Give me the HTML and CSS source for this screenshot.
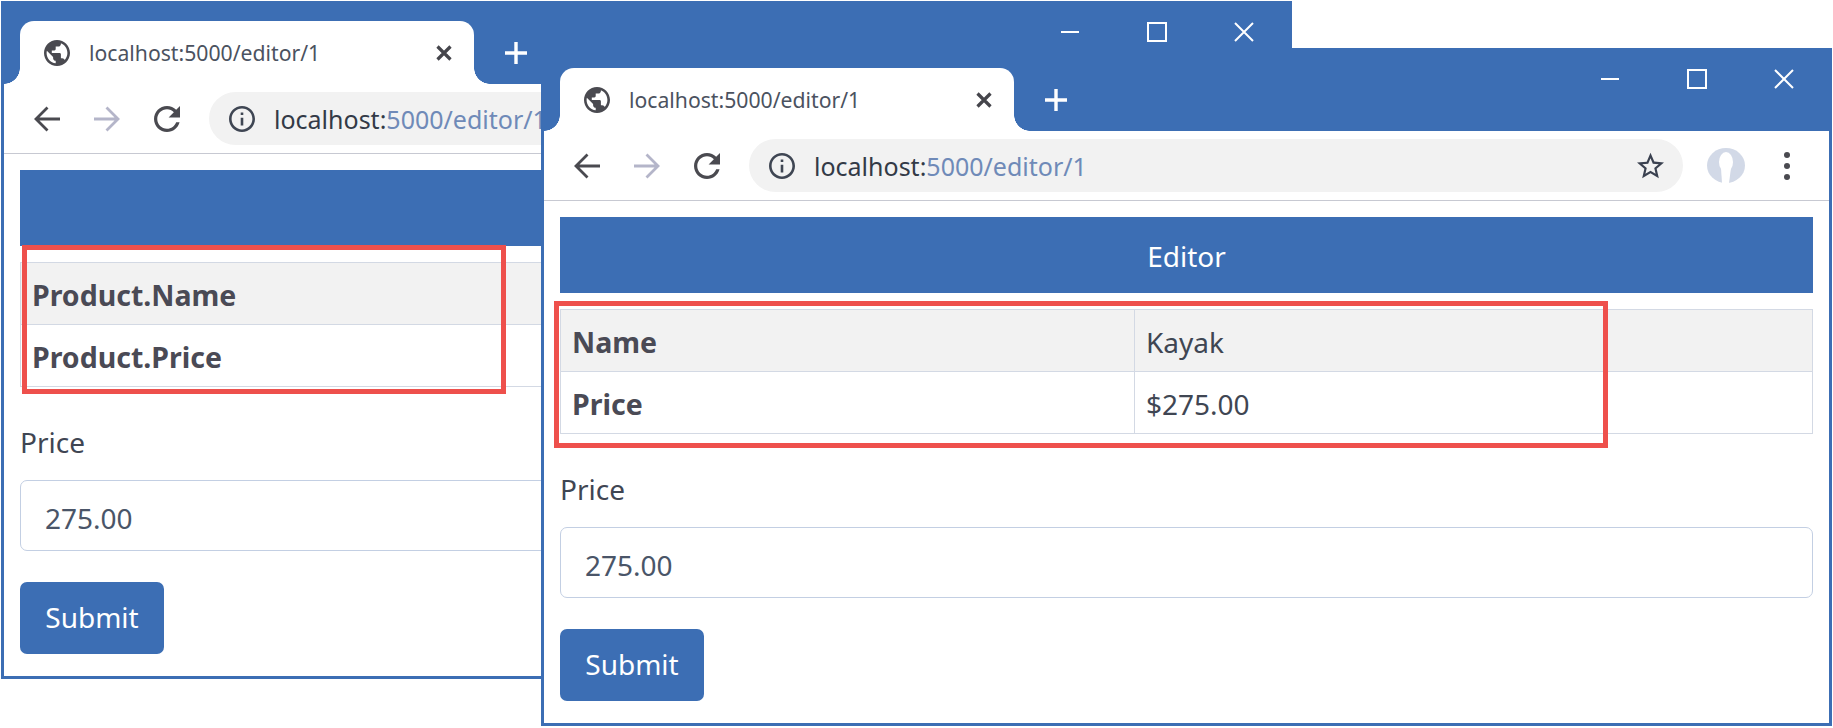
FILE: index.html
```html
<!DOCTYPE html>
<html lang="en">
<head>
    <meta charset="UTF-8">
    <meta name="viewport" content="width=device-width, initial-scale=1.0">
    <title>Editor windows</title>
    <link rel="stylesheet" href="styles.css">
</head>
<body>
    <svg class="icon-defs" aria-hidden="true">
        <symbol id="i-globe" viewBox="2 2 20 20"><path d="M12 2C6.48 2 2 6.48 2 12s4.48 10 10 10 10-4.48 10-10S17.52 2 12 2zm-1 17.93c-3.95-.49-7-3.85-7-7.93 0-.62.08-1.21.21-1.79L9 15v1c0 1.1.9 2 2 2v1.93zm6.9-2.54c-.26-.81-1-1.39-1.9-1.39h-1v-3c0-.55-.45-1-1-1H8v-2h2c.55 0 1-.45 1-1V7h2c1.1 0 2-.9 2-2v-.41c2.93 1.19 5 4.06 5 7.41 0 2.08-.8 3.97-2.1 5.39z"/></symbol>
        <symbol id="i-close" viewBox="0 0 16 16"><path d="M1.5 1.5l13 13M14.5 1.5l-13 13" fill="none" stroke="currentColor" stroke-width="3.2"/></symbol>
        <symbol id="i-plus" viewBox="0 0 22 22"><path d="M11 0v22M0 11h22" fill="none" stroke="currentColor" stroke-width="3.4"/></symbol>
        <symbol id="i-min" viewBox="0 0 20 20"><path d="M1 10h18" fill="none" stroke="currentColor" stroke-width="2"/></symbol>
        <symbol id="i-max" viewBox="0 0 20 20"><rect x="1" y="1" width="18" height="18" fill="none" stroke="currentColor" stroke-width="2"/></symbol>
        <symbol id="i-x" viewBox="0 0 20 20"><path d="M1 1l18 18M19 1L1 19" fill="none" stroke="currentColor" stroke-width="2"/></symbol>
        <symbol id="i-back" viewBox="0 0 26 26"><path d="M26 13H2.5M13.5 1.5L2 13l11.5 11.5" fill="none" stroke="currentColor" stroke-width="2.8"/></symbol>
        <symbol id="i-forward" viewBox="0 0 26 26"><path d="M0 13h23.5M12.5 1.5L24 13 12.5 24.5" fill="none" stroke="currentColor" stroke-width="2.8"/></symbol>
        <symbol id="i-reload" viewBox="4 4 16 16"><path d="M17.65 6.35C16.2 4.9 14.21 4 12 4c-4.42 0-7.99 3.58-7.99 8s3.57 8 7.99 8c3.73 0 6.84-2.55 7.73-6h-2.08c-.82 2.33-3.04 4-5.65 4-3.31 0-6-2.69-6-6s2.69-6 6-6c1.66 0 3.14.69 4.22 1.78L13 11h7V4l-2.35 2.35z"/></symbol>
        <symbol id="i-info" viewBox="2 2 20 20"><path d="M11 7h2v2h-2zm0 4h2v6h-2zm1-9C6.48 2 2 6.48 2 12s4.48 10 10 10 10-4.48 10-10S17.52 2 12 2zm0 18c-4.41 0-8-3.59-8-8s3.59-8 8-8 8 3.59 8 8-3.59 8-8 8z"/></symbol>
        <symbol id="i-star" viewBox="2 2 20 19"><path d="M22 9.24l-7.19-.62L12 2 9.19 8.63 2 9.24l5.46 4.73L5.82 21 12 17.27 18.18 21l-1.63-7.03L22 9.24zM12 15.4l-3.76 2.27 1-4.28-3.32-2.88 4.38-.38L12 6.1l1.71 4.04 4.38.38-3.32 2.88 1 4.28L12 15.4z"/></symbol>
        <symbol id="i-avatar" viewBox="0 0 38 35"><ellipse cx="19" cy="17.5" rx="19" ry="17.5" fill="#d2d9e7"/><ellipse cx="19" cy="14" rx="7" ry="10" fill="#fff"/><path d="M14 20h10l-2 15h-7z" fill="#fff"/></symbol>
    </svg>

    <div class="desktop">
        <!-- back window -->
        <div class="window window-back">
            <div class="titlebar">
                <div class="tab">
                    <svg class="tab-globe"><use href="#i-globe"/></svg>
                    <span class="tab-title">localhost:5000/editor/1</span>
                    <svg class="tab-close"><use href="#i-close"/></svg>
                </div>
                <svg class="new-tab"><use href="#i-plus"/></svg>
                <div class="controls">
                    <svg class="control"><use href="#i-min"/></svg>
                    <svg class="control"><use href="#i-max"/></svg>
                    <svg class="control"><use href="#i-x"/></svg>
                </div>
            </div>
            <div class="toolbar">
                <svg class="nav"><use href="#i-back"/></svg>
                <svg class="nav nav-off"><use href="#i-forward"/></svg>
                <svg class="nav"><use href="#i-reload"/></svg>
                <div class="address">
                    <svg class="info"><use href="#i-info"/></svg>
                    <span class="url">localhost:<span class="url-rest">5000/editor/1</span></span>
                    <svg class="star"><use href="#i-star"/></svg>
                </div>
                <svg class="avatar"><use href="#i-avatar"/></svg>
                <div class="menu-dots"><i></i><i></i><i></i></div>
            </div>
            <div class="content">
                <div class="banner"></div>
                <table class="details">
                    <tr class="striped"><th>Product.Name</th><td></td></tr>
                    <tr><th>Product.Price</th><td></td></tr>
                </table>
                <label class="field-label">Price</label>
                <input class="field" type="text" value="275.00">
                <button class="submit" type="button">Submit</button>
                <div class="callout callout-back"></div>
            </div>
        </div>

        <!-- front window -->
        <div class="window window-front">
            <div class="titlebar">
                <div class="tab">
                    <svg class="tab-globe"><use href="#i-globe"/></svg>
                    <span class="tab-title">localhost:5000/editor/1</span>
                    <svg class="tab-close"><use href="#i-close"/></svg>
                </div>
                <svg class="new-tab"><use href="#i-plus"/></svg>
                <div class="controls">
                    <svg class="control"><use href="#i-min"/></svg>
                    <svg class="control"><use href="#i-max"/></svg>
                    <svg class="control"><use href="#i-x"/></svg>
                </div>
            </div>
            <div class="toolbar">
                <svg class="nav"><use href="#i-back"/></svg>
                <svg class="nav nav-off"><use href="#i-forward"/></svg>
                <svg class="nav"><use href="#i-reload"/></svg>
                <div class="address">
                    <svg class="info"><use href="#i-info"/></svg>
                    <span class="url">localhost:<span class="url-rest">5000/editor/1</span></span>
                    <svg class="star"><use href="#i-star"/></svg>
                </div>
                <svg class="avatar"><use href="#i-avatar"/></svg>
                <div class="menu-dots"><i></i><i></i><i></i></div>
            </div>
            <div class="content">
                <div class="banner">Editor</div>
                <table class="details">
                    <tr class="striped"><th>Name</th><td>Kayak</td></tr>
                    <tr><th>Price</th><td>$275.00</td></tr>
                </table>
                <label class="field-label">Price</label>
                <input class="field" type="text" value="275.00">
                <button class="submit" type="button">Submit</button>
                <div class="callout callout-front"></div>
            </div>
        </div>
    </div>
</body>
</html>
```

FILE: styles.css
```css
body {
    margin: 0;
    background-color: #fff;
    font-family: "Noto Sans", "Open Sans", sans-serif;
    color: #3f4653;
    overflow: hidden;
}
.icon-defs {
    display: none;
}
.desktop {
    position: relative;
    width: 1833px;
    height: 728px;
    overflow: hidden;
}

/* windows sit on a free canvas */
.window {
    position: absolute;
    box-sizing: border-box;
    width: 1291px;
    height: 678px;
    border: 3px solid #3c6eb4;
    background-color: #fff;
    overflow: hidden;
}
.window-back {
    left: 1px;
    top: 1px;
}
.window-front {
    left: 541px;
    top: 48px;
}

.titlebar {
    display: flex;
    align-items: flex-start;
    box-sizing: border-box;
    height: 80px;
    padding: 17px 35px 0 16px;
    background-color: #3c6eb4;
}
.tab {
    position: relative;
    display: flex;
    align-items: center;
    box-sizing: border-box;
    width: 454px;
    height: 63px;
    padding: 0 22px 0 24px;
    background-color: #fff;
    border-radius: 14px 14px 0 0;
}
.tab::before,
.tab::after {
    content: "";
    position: absolute;
    bottom: 0;
    width: 16px;
    height: 16px;
}
.tab::before {
    left: -16px;
    background: radial-gradient(circle at 0 0, transparent 15.5px, #fff 16px);
}
.tab::after {
    right: -16px;
    background: radial-gradient(circle at 100% 0, transparent 15.5px, #fff 16px);
}
.tab-globe {
    width: 26px;
    height: 26px;
    fill: #4a4a50;
}
.tab-title {
    margin-left: 19px;
    font-size: 21.2px;
    color: #4b5260;
}
.tab-close {
    width: 16px;
    height: 16px;
    margin-left: auto;
    color: #45454b;
}
.new-tab {
    width: 22px;
    height: 22px;
    margin: 21px 0 0 31px;
    color: #fff;
}
.controls {
    display: flex;
    gap: 67px;
    margin: 1px 0 0 auto;
    color: #fff;
}
.control {
    width: 20px;
    height: 20px;
}

.toolbar {
    display: flex;
    align-items: center;
    box-sizing: border-box;
    height: 70px;
    padding: 0 39px 0 30px;
    border-bottom: 1px solid #c7c9d2;
}
.nav {
    width: 26px;
    height: 26px;
    margin-right: 34px;
    fill: #4a4a50;
    color: #4a4a50;
}
.nav-off {
    color: #b4b5c9;
}
.nav:nth-child(3) {
    margin-right: 29px;
}
.address {
    flex: 1;
    display: flex;
    align-items: center;
    height: 53px;
    padding: 0 19px 0 20px;
    background-color: #f2f2f2;
    border-radius: 27px;
}
.info {
    width: 26px;
    height: 26px;
    fill: #3f4653;
}
.url {
    margin-left: 19px;
    font-size: 25px;
    color: #333a47;
    white-space: nowrap;
}
.url-rest {
    color: #6f8ab8;
}
.star {
    width: 27px;
    height: 27px;
    margin-left: auto;
    fill: #3a4150;
}
.avatar {
    width: 38px;
    height: 35px;
    margin-left: 24px;
}
.menu-dots {
    display: flex;
    flex-direction: column;
    gap: 5px;
    margin-left: 39px;
}
.menu-dots i {
    width: 6px;
    height: 6px;
    background-color: #4a4a50;
    border-radius: 50%;
}

.content {
    position: relative;
    padding: 16px;
}
.banner {
    height: 76px;
    line-height: 78px;
    text-align: center;
    font-size: 28px;
    color: #fff;
    background-color: #3c6eb4;
}
.details {
    width: 100%;
    margin-top: 16px;
    border-collapse: collapse;
    table-layout: fixed;
    font-size: 28px;
}
.details th,
.details td {
    height: 62px;
    box-sizing: border-box;
    padding: 2px 11px 0;
    border: 1px solid #d3d9e4;
    text-align: left;
    color: #3f4653;
}
.details th {
    width: 574px;
    font-size: 28.5px;
    font-weight: 700;
    color: #4a4a55;
}
.striped {
    background-color: #f2f2f2;
}
.field-label {
    display: block;
    margin: 36px 0 19px;
    line-height: 38px;
    font-size: 28px;
}
.field {
    display: block;
    box-sizing: border-box;
    width: 100%;
    height: 71px;
    padding: 5px 24px 0;
    border: 1px solid #c3cfe3;
    border-radius: 7px;
    font-family: inherit;
    font-size: 28px;
    color: #4a5568;
}
.submit {
    display: block;
    width: 144px;
    height: 72px;
    margin-top: 31px;
    padding: 0 0 2px;
    border: none;
    border-radius: 7px;
    font-family: inherit;
    font-size: 28px;
    color: #fff;
    background-color: #3c6eb4;
}

/* red annotation boxes over the table */
.callout {
    position: absolute;
    box-sizing: border-box;
    border: 5px solid #ee504c;
}
.callout-back {
    left: 18px;
    top: 91px;
    width: 484px;
    height: 149px;
}
.callout-front {
    left: 10px;
    top: 100px;
    width: 1054px;
    height: 147px;
}
```
